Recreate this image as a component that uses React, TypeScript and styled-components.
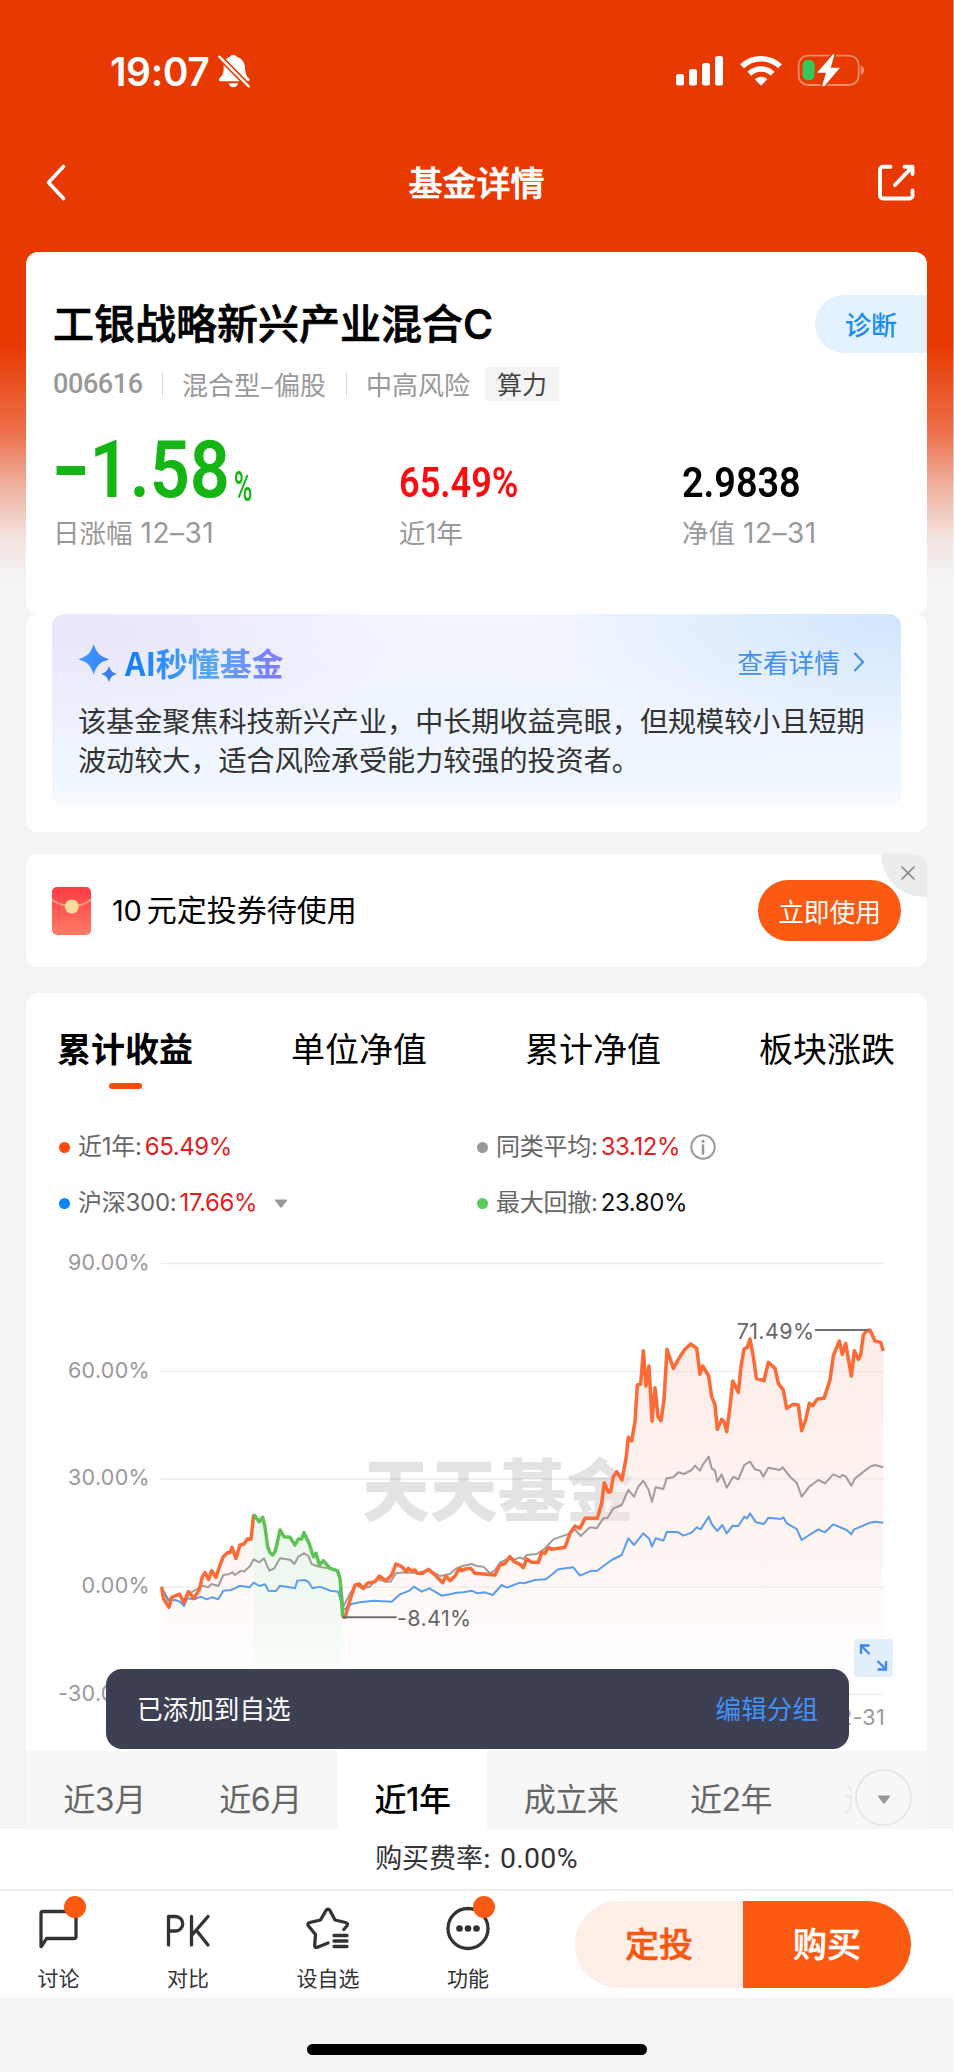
import React from "react";
import styled, { createGlobalStyle, css } from "styled-components";

const SANS = `Inter, "Noto Sans CJK SC", "Liberation Sans", sans-serif`;
const CJK = `"Noto Sans CJK SC", "Liberation Sans", sans-serif`;
const DIN = `Roboto, "Noto Sans CJK SC", sans-serif`;

const GlobalStyle = createGlobalStyle`
  *, *::before, *::after { box-sizing: border-box; }
  body { margin: 0; background: #f4f4f4; }
  button { border: 0; padding: 0; margin: 0; background: none; font: inherit; color: inherit; }
`;

const Page = styled.div`
  position: relative;
  width: 954px;
  height: 2072px;
  overflow: hidden;
  display: flex;
  flex-direction: column;
  font-family: ${SANS};
  color: #000;
  white-space: nowrap;
  border-right: 1px solid rgba(255, 255, 255, 0.55);
  background: linear-gradient(
    180deg,
    #e83901 0,
    #e83901 345px,
    #ec6f48 430px,
    #f0b5a4 490px,
    #f3e5e1 540px,
    #f4f4f4 580px
  );
`;

/* ---------- header ---------- */

const StatusBar = styled.header`
  height: 140px;
  padding: 0 88px 0 110px;
  display: flex;
  justify-content: space-between;
  color: #fff;
`;

const Clock = styled.div`
  display: flex;
  align-items: center;
  height: 142px;
  font-size: 39px;
  font-weight: 600;
  letter-spacing: -0.4px;
  svg { margin-left: 9px; }
`;

const StatusIcons = styled.div`
  display: flex;
  align-items: center;
  height: 140px;
`;

const NavBar = styled.nav`
  height: 112px;
  padding: 0 38px 0 46px;
  display: flex;
  justify-content: space-between;
  align-items: flex-start;
  color: #fff;
  svg { display: block; margin-top: 23px; }
`;

const NavTitle = styled.h1`
  margin: 0 0 0 9px;
  font: 500 34px/84px ${CJK};
  -webkit-text-stroke: 0.7px currentColor;
`;

/* ---------- cards ---------- */

const Card = styled.section<{ $h: number; $gap?: number; $r?: string }>`
  position: relative;
  flex: none;
  width: 901px;
  height: ${(p) => p.$h}px;
  margin: 0 0 ${(p) => p.$gap ?? 0}px 26px;
  border-radius: ${(p) => p.$r ?? "12px"};
  background: #fff;
`;

const FundHead = styled.div`
  display: flex;
  justify-content: space-between;
  align-items: center;
  padding: 43px 0 0 27px;
  height: 101px;
`;

const FundName = styled.h2`
  margin: 0;
  font: 500 41px/58px Inter, ${CJK};
  -webkit-text-stroke: 0.7px currentColor;
`;

const DiagnoseButton = styled.button`
  width: 112px;
  height: 58px;
  border-radius: 29px 0 0 29px;
  background: #e4f2ff;
  color: #1a8cf5;
  font: 500 26px/54px ${CJK};
`;

const MetaRow = styled.div`
  display: flex;
  align-items: center;
  height: 34px;
  margin: 14px 0 0 27px;
  font: 400 26px/32px ${CJK};
  color: #999;
`;

const FundCode = styled.span`
  width: 109px;
  font: 500 27px/34px ${DIN};
  letter-spacing: -0.4px;
`;

const MetaItem = styled.span<{ $w: number }>`
  display: flex;
  align-items: center;
  width: ${(p) => p.$w}px;
  &::before {
    content: "";
    width: 1px;
    height: 25px;
    margin-right: 19px;
    background: #ddd;
  }
`;

const Tag = styled.span`
  width: 74px;
  height: 34px;
  text-align: center;
  font-size: 25px;
  line-height: 32px;
  color: #444;
  background: #f4f4f4;
`;

const Stats = styled.div`
  display: grid;
  grid-template-columns: 346px 283px auto;
  grid-template-rows: 96px 36px;
  align-items: baseline;
  margin: 21px 0 0 27px;
`;

const StatValue = styled.div<{ $color: string; $size: number; $scale: number }>`
  font: 600 ${(p) => p.$size}px/96px ${DIN};
  color: ${(p) => p.$color};
  transform: scaleX(${(p) => p.$scale});
  transform-origin: left;
`;

const Minus = styled.i`
  display: inline-block;
  width: 32px;
  height: 9px;
  margin: 0 5px 22px 4px;
  vertical-align: baseline;
  background: currentColor;
`;

const Unit = styled.small`
  display: inline-block;
  font-size: 42px;
  font-weight: 500;
  transform: scaleX(0.68) translateY(4px);
  transform-origin: left;
  margin-left: 4px;
`;

const StatLabel = styled.div`
  margin-top: -3px;
  font: 400 26.5px/36px Inter, ${CJK};
  color: #999;
  span { margin-left: 8px; font-size: 28px; letter-spacing: 0.5px; }
`;

/* ---------- AI summary ---------- */

const AiBox = styled.div`
  position: relative;
  width: 849px;
  height: 192px;
  margin-left: 26px;
  padding: 26px 27px 0 26px;
  border-radius: 12px;
  background:
    linear-gradient(180deg, rgba(255, 255, 255, 0) 88%, rgba(255, 255, 255, 0.6) 100%),
    radial-gradient(340px 120px at 4% 10%, #e9e6fa, rgba(233, 230, 250, 0)),
    radial-gradient(380px 130px at 102% 0, #cfe5fd, rgba(207, 229, 253, 0)),
    linear-gradient(180deg, #f3f6fe, #eef5fe 55%, #f0f7ff);
`;

const AiHead = styled.div`
  display: flex;
  align-items: center;
  height: 44px;
`;

const AiTitle = styled.strong`
  margin-left: 7px;
  font: 700 32px/44px ${CJK};
  letter-spacing: -0.1px;
  background: linear-gradient(90deg, #0f7cff, #58a8f8 55%, #8078ff);
  -webkit-background-clip: text;
  background-clip: text;
  color: transparent;
`;

const MoreLink = styled.a`
  display: flex;
  align-items: center;
  gap: 13px;
  margin-left: auto;
  margin-right: 9px;
  font: 400 25.7px/44px ${CJK};
  color: #4390ee;
`;

const AiText = styled.p`
  margin: 16px 0 0;
  font: 400 28.1px/39px ${CJK};
  color: #333;
`;

/* ---------- coupon ---------- */

const CouponRow = styled.div`
  display: flex;
  align-items: center;
  height: 113px;
  padding: 0 26px 0 26px;
`;

const CouponText = styled.span`
  margin: -3px 0 0 21px;
  font: 400 30px/40px ${CJK};
  span { font-family: Inter; font-size: 29px; margin-right: 5px; letter-spacing: -0.2px; }
`;

const UseButton = styled.button`
  width: 143px;
  height: 61px;
  margin-left: auto;
  border-radius: 31px;
  background: #fc5a12;
  color: #fff;
  font: 400 25.7px/55px ${CJK};
  vertical-align: top;
`;

const CloseCorner = styled.button`
  position: absolute;
  top: 0;
  right: 0;
  width: 46px;
  height: 43px;
  padding-bottom: 6px;
  border-radius: 0 12px 0 44px;
  background: #ececec;
  svg { display: block; margin: 0 0 0 19px; }
`;

/* ---------- performance ---------- */

const SeriesTabs = styled.div`
  display: flex;
  justify-content: space-between;
  padding: 28px 32px 0 31px;
  height: 104px;
`;

const SeriesTab = styled.button<{ $on?: boolean }>`
  display: flex;
  flex-direction: column;
  align-items: center;
  height: 68px;
  font: ${(p) => (p.$on ? 700 : 400)} 34px/54px ${CJK};
  ${(p) =>
    p.$on &&
    css`
      &::after {
        content: "";
        width: 33px;
        height: 7px;
        margin-top: 8px;
        border-radius: 4px;
        background: #ff4a0a;
      }
    `}
`;

const Legend = styled.div`
  display: grid;
  grid-template-columns: 418px auto;
  grid-template-rows: 56px 56px;
  align-items: center;
  padding: 22px 0 0 33px;
  height: 143px;
`;

const LegendItem = styled.div<{ $dot: string }>`
  display: flex;
  align-items: center;
  font: 400 24px/34px Inter, ${CJK};
  letter-spacing: -0.25px;
  color: #666;
  &::before {
    content: "";
    width: 11px;
    height: 11px;
    margin-right: 8px;
    border-radius: 50%;
    background: ${(p) => p.$dot};
  }
  svg { margin-left: 10px; }
`;

const LegendValue = styled.span<{ $dark?: boolean }>`
  margin-left: 3px;
  letter-spacing: -0.4px;
  color: ${(p) => (p.$dark ? "#111" : "#e81c1c")};
`;

const CaretSlot = styled.span`
  display: flex;
  margin-left: 7px;
`;

const ChartSvg = styled.svg`
  display: block;
  margin-left: 1px;
  font-family: Inter, sans-serif;
`;

const ExpandButton = styled.button`
  position: absolute;
  left: 828px;
  top: 646px;
  width: 39px;
  height: 38px;
  border-radius: 3px;
  background: #e4effc;
  svg { display: block; }
`;

const RangeBar = styled.div`
  position: relative;
  display: flex;
  align-items: stretch;
  width: 901px;
  height: 78px;
  margin-left: 26px;
  background: #f7f7f7;
`;

const Range = styled.button<{ $w: number; $on?: boolean }>`
  width: ${(p) => p.$w}px;
  padding-top: 3px;
  font: ${(p) => (p.$on ? 500 : 400)} 32px/92px Inter, ${CJK};
  letter-spacing: -0.5px;
  color: ${(p) => (p.$on ? "#000" : "#666")};
  background: ${(p) => (p.$on ? "#fff" : "transparent")};
`;

const RangePeek = styled.span`
  width: 8px;
  margin-left: auto;
  margin-right: 3px;
  overflow: hidden;
  font: 400 32px/92px ${CJK};
  color: #ebebeb;
`;

const RangeMore = styled.button`
  flex: none;
  width: 57px;
  height: 57px;
  margin: 18px 15px 0 0;
  border: 2px solid #e6e6e6;
  border-radius: 50%;
  svg { display: block; margin: 3px auto 0; }
`;

/* ---------- toast & footer ---------- */

const Toast = styled.div`
  position: absolute;
  left: 106px;
  top: 1669px;
  width: 743px;
  height: 80px;
  padding: 0 31px;
  display: flex;
  justify-content: space-between;
  border-radius: 16px;
  background: rgba(57, 59, 80, 0.98);
  color: #fff;
  font: 400 25.6px/77px ${CJK};
  a { color: #4290f5; }
`;

const Footer = styled.footer`
  background: #fff;
`;

const Fee = styled.div`
  height: 62px;
  padding-top: 1px;
  border-bottom: 2px solid #f0f0f0;
  text-align: center;
  font: 400 27px/58px Inter, ${CJK};
  color: #333;
  span { margin-left: 9px; letter-spacing: 0.3px; font-family: Roboto; font-size: 28.5px; }
`;

const ActionBar = styled.div`
  display: flex;
  height: 107px;
`;

const Action = styled.button<{ $w: number }>`
  position: relative;
  display: flex;
  flex-direction: column;
  align-items: center;
  width: ${(p) => p.$w}px;
  padding-top: 15px;
  font: 400 21px/30px ${CJK};
  color: #333;
  svg { display: block; margin-bottom: 12px; overflow: visible; }
`;

const Badge = styled.i<{ $x: number }>`
  position: absolute;
  left: ${(p) => p.$x}px;
  top: 5px;
  width: 22px;
  height: 22px;
  border-radius: 50%;
  background: #fc5a12;
`;

const Trade = styled.div`
  display: flex;
  width: 336px;
  height: 87px;
  margin: 10px 0 0 auto;
  margin-right: 42px;
  overflow: hidden;
  border-radius: 44px;
`;

const TradeButton = styled.button<{ $solid?: boolean }>`
  flex: 1;
  padding-bottom: 3px;
  font: 500 34px/80px ${CJK};
  -webkit-text-stroke: 0.5px currentColor;
  color: ${(p) => (p.$solid ? "#fff" : "#f9560f")};
  background: ${(p) => (p.$solid ? "#fc5a12" : "#fdeee8")};
`;

const HomeArea = styled.div`
  flex: 1;
  padding: 46px 0 0 307px;
  background: #f4f4f4;
  &::after {
    content: "";
    display: block;
    width: 340px;
    height: 11px;
    border-radius: 6px;
    background: #000;
  }
`;

/* ---------- chart data (thirds of a pixel inside the plot group) ---------- */

type Pt = [number, number];
const pts = (s: string, dx = 0): Pt[] =>
  s.trim().split(/\s+/).map((p) => {
    const [x, y] = p.split(",").map(Number);
    return [x + dx, y] as Pt;
  });
const line = (p: Pt[]) => "M" + p.map((q) => q.join(",")).join("L");
const area = (p: Pt[], base: number) =>
  `${line(p)}L${p[p.length - 1][0]},${base}L${p[0][0]},${base}Z`;

const H2 = 1140;
const rise = pts(
  "65,1040 70,1075 87,1102 95,1072 118,1062 132,1088 145,1055 162,1075 178,1048 187,1010 195,998 206,1018 215,992 228,1012 240,975 250,950 262,938 270,938 276,922 288,955 300,915 312,912 322,897 333,898 341,823"
);
const drawdown = pts(
  "341,823 358,845 368,832 375,860 383,920 390,938 398,945 405,935 411,912 420,870 432,890 450,892 465,915 475,897 485,897 492,878 508,912 520,950 528,940 538,975 550,962 570,985 592,992 600,1015 608,1130"
);
const recovery = [
  ...pts(
    "608,1130 615,1132 630,1080 645,1035 658,1032 670,1045 682,1030 705,1025 718,1008 738,1022 755,1005 768,972 784,979 800,995 805,985 815,992 825,990 832,1000 848,1000 865,988 885,1005 908,1028 918,1008 930,1022 945,1008 958,985 965,992 975,987 992,985 1005,1000 1065,1005 1080,975 1095,970 1110,950 1122,965 1140,973"
  ),
  ...pts(
    "10,983 20,957 35,967 55,967 65,937 75,940 85,922 95,928 135,922 150,880 165,858 180,865 195,835 232,835 245,790 253,728 265,757 272,755 280,710 290,695 306,720 318,655 325,592 335,603 345,545 352,435 362,432 370,332 378,438 387,378 396,543 405,443 414,530 423,542 432,480 441,328 460,385 480,350 495,328 512,312 530,325 540,403 548,378 566,408 575,470 585,495 592,568 605,538 612,545 620,575 630,500 638,423 655,457 663,380 672,327 682,322 690,297 700,350 709,415 732,422 745,367 765,385 775,430 790,450 800,505 820,493 835,495 845,572 857,540 868,490 878,497 892,477 912,475 930,420 940,347 958,303 967,343 977,310 994,408 1003,332 1015,358 1022,345 1030,285 1040,272 1050,270 1065,303 1082,307 1090,333",
    H2
  ),
];
const peers = [
  ...pts(
    "65,1045 85,1078 118,1062 132,1085 148,1060 175,1045 187,1037 205,1042 215,1032 235,1038 250,1005 265,1003 277,997 285,1005 303,992 312,995 330,978 341,958 358,967 372,955 388,992 403,985 420,955 440,958 452,960 463,972 475,950 492,940 505,948 515,972 530,978 545,982 570,985 595,992 603,1030 610,1100 630,1060 648,1035 665,1045 690,1040 700,1028 715,1018 735,1025 752,1025 768,1000 795,997 832,1000 865,988 900,1008 930,1002 950,985 968,978 995,972 1010,978 1030,980 1050,1000 1065,990 1080,968 1105,955 1125,958"
  ),
  ...pts(
    "0,952 10,957 20,945 50,942 75,925 100,898 150,880 165,868 182,888 210,862 230,865 250,835 262,835 280,805 305,795 325,750 342,770 355,740 370,722 385,748 396,785 407,742 430,747 440,715 460,712 475,697 492,702 515,690 525,677 540,692 550,672 566,650 575,685 585,692 592,725 605,703 620,743 640,710 655,718 673,675 690,665 705,688 720,692 730,710 745,683 780,690 788,682 810,710 830,728 845,770 868,740 895,720 915,730 940,703 960,712 967,705 978,710 994,737 1005,715 1025,700 1050,680 1065,675 1090,682",
    H2
  ),
];
const csi300 = [
  ...pts(
    "65,1045 85,1082 105,1080 120,1085 132,1098 142,1075 162,1078 182,1070 200,1078 215,1072 235,1078 250,1052 272,1050 285,1045 300,1037 328,1042 341,1028 358,1038 375,1033 385,1052 408,1053 420,1037 440,1040 465,1045 472,1022 492,1020 505,1025 517,1045 540,1040 570,1052 595,1055 610,1110 635,1092 660,1087 700,1082 755,1085 780,1063 808,1052 822,1040 845,1055 868,1045 905,1067 930,1063 950,1058 970,1057 995,1052 1012,1060 1035,1057 1058,1065 1085,1035 1100,1043"
  ),
  ...pts(
    "0,1028 12,1030 45,1020 78,1018 115,988 160,982 180,1007 215,992 230,993 275,960 305,945 325,895 342,915 370,880 388,897 396,920 407,895 430,902 441,875 475,877 490,887 515,878 530,862 542,868 566,830 575,852 592,873 607,855 620,880 638,857 655,858 673,830 682,835 690,820 708,847 732,852 745,833 782,837 790,832 800,850 830,867 845,900 868,885 895,868 915,877 940,853 980,870 994,883 1003,868 1050,848 1065,845 1090,848",
    H2
  ),
];

const AXIS: [string, number][] = [
  ["90.00%", 23.5],
  ["60.00%", 131.5],
  ["30.00%", 239],
  ["0.00%", 347],
  ["-30.00%", 454.5],
];

const Chart = () => (
  <ChartSvg width="900" height="511" viewBox="0 0 900 511">
    <defs>
      <linearGradient id="warm" gradientUnits="userSpaceOnUse" x1="0" y1="270" x2="0" y2="1362">
        <stop offset="0" stopColor="#f9d9cf" stopOpacity="0.5" />
        <stop offset="0.65" stopColor="#fceae4" stopOpacity="0.42" />
        <stop offset="1" stopColor="#fff" stopOpacity="0.2" />
      </linearGradient>
      <linearGradient id="green" gradientUnits="userSpaceOnUse" x1="0" y1="820" x2="0" y2="1362">
        <stop offset="0" stopColor="#e8f6ea" />
        <stop offset="0.6" stopColor="#f4fbf5" />
        <stop offset="1" stopColor="#fbfefb" />
      </linearGradient>
    </defs>
    {AXIS.map(([label, y]) => (
      <line key={label} x1="134" x2="857" y1={y} y2={y} stroke="#ececec" strokeWidth="1.6" />
    ))}
    <text x="335" y="276" fontSize="68" fontWeight="900" fill="#000" fillOpacity="0.11" fontFamily="Noto Sans CJK SC">
      天天基金
    </text>
    <g fontSize="21.5" fill="#999" letterSpacing="0.3">
      {AXIS.map(([label, y]) => (
        <text key={label} x="123" y={y + 6} textAnchor="end">
          {label}
        </text>
      ))}
      <text x="134" y="485">2024-12-31</text>
      <text x="858" y="485" textAnchor="end">2025-12-31</text>
    </g>
    <g transform="translate(113 0) scale(0.33333)" fill="none" strokeLinejoin="round">
      <path d={area(rise, 1362)} fill="url(#warm)" />
      <path d={area(drawdown, 1362)} fill="url(#green)" />
      <path d={area(recovery, 1362)} fill="url(#warm)" />
      <path d={line(csi300)} stroke="#5a9df0" strokeWidth="6" />
      <path d={line(peers)} stroke="#8c8684" strokeOpacity="0.8" strokeWidth="6" />
      <path d={line(rise)} stroke="#fd6a35" strokeWidth="10.5" />
      <path d={line(recovery)} stroke="#fd6a35" strokeWidth="10.5" />
      <path d={line(drawdown)} stroke="#5dc357" strokeWidth="10.5" />
      <path d="M606,1132H770M2025,270H2186" stroke="#707070" strokeWidth="6" />
    </g>
    <g fontSize="21.500" fill="#666" letterSpacing="0.4">
      <text x="370" y="385.500">-8.41%</text>
      <text x="787.500" y="98.500" textAnchor="end">71.49%</text>
    </g>
  </ChartSvg>
);

/* ---------- icons ---------- */

const BellOff = () => (
  <svg width="32" height="34" viewBox="0 0 96 102">
    <path
      d="M46 2c6 0 9 3 10 6 16 4 24 17 25 33 1 18 4 24 12 32 3 3 2 9-3 9H8c-6 0-7-6-3-10 9-8 12-16 12-31C17 24 22 12 36 8c1-3 4-6 10-6zM32 88h28c-1 8-7 12-14 12s-13-4-14-12z"
      fill="#fff"
    />
    <path d="M3 7 92 97" stroke="#e83901" strokeWidth="17" />
    <path d="M4 8 92 97" stroke="#fff" strokeWidth="7" strokeLinecap="round" />
  </svg>
);

const Signal = () => (
  <svg width="48" height="31" viewBox="0 0 48 31" fill="#fff">
    <rect x="0" y="19" width="8" height="11.500" rx="2.500" />
    <rect x="13" y="14" width="8" height="16.500" rx="2.500" />
    <rect x="26" y="8" width="8" height="22.500" rx="2.500" />
    <rect x="39" y="1" width="8" height="29.500" rx="2.500" />
  </svg>
);

const WifiSvg = styled.svg`
  margin-left: 16px;
`;

const Wifi = () => (
  <WifiSvg width="42" height="31" viewBox="0 0 126 93">
    <g fill="none" stroke="#fff" strokeWidth="16.500">
      <path d="M6 34a82 82 0 0 1 114 0" />
      <path d="M28 56a50 50 0 0 1 70 0" />
    </g>
    <path d="M63 92 44 73a27 27 0 0 1 38 0z" fill="#fff" />
  </WifiSvg>
);

const BatterySvg = styled.svg`
  margin-left: 15px;
`;

const Battery = () => (
  <BatterySvg width="68" height="34" viewBox="0 0 204 102">
    <rect x="5" y="8" width="180" height="88" rx="28" fill="none" stroke="#fff" strokeOpacity="0.42" strokeWidth="5.500" />
    <path d="M191 38c14 2 14 26 0 28z" fill="#fff" fillOpacity="0.42" />
    <rect x="17" y="21" width="36" height="61" rx="15" fill="#34c759" />
    <path
      d="M107 5 60 59h27l-11 36c-1 5 4 6 7 3l46-54h-28l11-37c1-5-3-5-5-2z"
      fill="#fff"
      stroke="#e83901"
      strokeWidth="10"
      paintOrder="stroke"
    />
  </BatterySvg>
);

const Back = () => (
  <svg width="20" height="40" viewBox="0 0 20 40">
    <path d="M17.500 3.500 2.500 19.500l15 16" fill="none" stroke="#fff" strokeWidth="3.600" strokeLinecap="round" strokeLinejoin="round" />
  </svg>
);

const Share = () => (
  <svg width="37" height="40" viewBox="0 0 37 40" fill="none" stroke="#fff" strokeWidth="3.900" strokeLinecap="round" strokeLinejoin="round">
    <path d="M12.500 3.700H5a3 3 0 0 0-3 3V32.500a3 3 0 0 0 3 3H31.500a3 3 0 0 0 3-3V27.500" />
    <path d="M26.500 3.700H34.500V11M34 4.200 17 22" />
  </svg>
);

const Sparkles = () => (
  <svg width="40" height="40" viewBox="0 0 120 120">
    <defs>
      <linearGradient id="spark" x1="0" x2="1">
        <stop offset="0" stopColor="#3f9cff" />
        <stop offset="1" stopColor="#3a7ef5" />
      </linearGradient>
    </defs>
    <path d="M47 7c9 26 18 36 46 45-28 9-37 18-46 46C38 70 29 61 1 52 29 43 38 33 47 7z" fill="url(#spark)" />
    <path d="M93 72c5 14 9 19 23 24-14 5-18 10-23 24-5-14-9-19-23-24 14-5 18-10 23-24z" fill="#3a7ef5" />
  </svg>
);

const Envelope = () => (
  <svg width="39" height="48" viewBox="0 0 39 48">
    <defs>
      <linearGradient id="env" x1="0" x2="0" y1="0" y2="1">
        <stop offset="0" stopColor="#fc3b45" />
        <stop offset="1" stopColor="#ff7c62" />
      </linearGradient>
    </defs>
    <rect width="39" height="48" rx="5" fill="url(#env)" />
    <path d="M0 12.500C9 21 30 21 39 12.500" fill="none" stroke="#fd9a7c" strokeWidth="1.800" />
    <circle cx="19.800" cy="19.500" r="7" fill="#fddca0" />
  </svg>
);

const Caret = () => (
  <svg width="14" height="9" viewBox="0 0 14 9">
    <path d="M1.500.5h11q1.200.2.400 1.300L8 8q-1 1-2 0L1.100 1.800Q.300.700 1.500.5z" fill="#999" />
  </svg>
);

const Info = () => (
  <svg width="26" height="26" viewBox="0 0 26 26" fill="none" stroke="#999" strokeWidth="2">
    <circle cx="13" cy="13" r="11.700" />
    <path d="M13 11.500V19.500" strokeWidth="2.600" strokeLinecap="round" />
    <circle cx="13" cy="7.300" r="1.600" fill="#999" stroke="none" />
  </svg>
);

const icon = {
  width: 44,
  height: 44,
  viewBox: "0 0 44 44",
  fill: "none",
  stroke: "#333",
  strokeWidth: 3.3,
  strokeLinecap: "round",
  strokeLinejoin: "round",
} as const;

const Chat = () => (
  <svg {...icon}>
    <path d="M4 40.500V7.500Q4 5.500 6 5.500H37Q39 5.500 39 7.500V30.500Q39 32.500 37 32.500H9.500L4.500 40.500z" />
  </svg>
);

const Versus = () => (
  <svg {...icon}>
    <path d="M2.500 39V10.500H9.500a7.200 7.200 0 0 1 0 14.500H3M25.500 10.500V39M42 10.500 26 29M30.500 24.500 42 39" />
  </svg>
);

const StarList = () => (
  <svg {...icon}>
    <path d="M22 37 11.500 41.200Q8.500 42.200 8.700 39L9.500 28.500 2.500 20Q.800 17.500 3.800 16.500L14.500 14 20 4.500Q22 1.700 24 4.500L29 14 39.500 16.500Q42.800 17.500 40.800 20L37.800 23.500" />
    <path d="M28 29.500H41M28 35H41M28 40.500H41" />
  </svg>
);

const Dots = () => (
  <svg {...icon}>
    <circle cx="22" cy="22.500" r="20" />
    <g fill="#333" stroke="none">
      <circle cx="13.500" cy="22.500" r="3.300" />
      <circle cx="22" cy="22.500" r="3.300" />
      <circle cx="30.500" cy="22.500" r="3.300" />
    </g>
  </svg>
);

export default function App() {
  return (
    <Page>
      <GlobalStyle />
      <StatusBar>
        <Clock>
          19:07
          <BellOff />
        </Clock>
        <StatusIcons>
          <Signal />
          <Wifi />
          <Battery />
        </StatusIcons>
      </StatusBar>
      <NavBar>
        <Back />
        <NavTitle>基金详情</NavTitle>
        <Share />
      </NavBar>

      <Card $h={362}>
        <FundHead>
          <FundName>工银战略新兴产业混合C</FundName>
          <DiagnoseButton>诊断</DiagnoseButton>
        </FundHead>
        <MetaRow>
          <FundCode>006616</FundCode>
          <MetaItem $w={184}>混合型–偏股</MetaItem>
          <MetaItem $w={139}>中高风险</MetaItem>
          <Tag>算力</Tag>
        </MetaRow>
        <Stats>
          <StatValue $color="#16b516" $size={79} $scale={0.89}>
            <Minus />1.58<Unit>%</Unit>
          </StatValue>
          <StatValue $color="#fe0b12" $size={42} $scale={0.86}>65.49%</StatValue>
          <StatValue $color="#000" $size={42} $scale={0.9}>2.9838</StatValue>
          <StatLabel>日涨幅<span>12–31</span></StatLabel>
          <StatLabel>近1年</StatLabel>
          <StatLabel>净值<span>12–31</span></StatLabel>
        </Stats>
      </Card>

      <Card $h={218} $gap={22}>
        <AiBox>
          <AiHead>
            <Sparkles />
            <AiTitle>AI秒懂基金</AiTitle>
            <MoreLink>
              查看详情
              <svg width="12" height="20" viewBox="0 0 12 20">
                <path d="M1.500 1 10 10 1.500 19" fill="none" stroke="#4390ee" strokeWidth="2.200" />
              </svg>
            </MoreLink>
          </AiHead>
          <AiText>
            该基金聚焦科技新兴产业，中长期收益亮眼，但规模较小且短期
            <br />
            波动较大，适合风险承受能力较强的投资者。
          </AiText>
        </AiBox>
      </Card>

      <Card $h={113} $gap={26}>
        <CouponRow>
          <Envelope />
          <CouponText>
            <span>10</span>元定投券待使用
          </CouponText>
          <UseButton>立即使用</UseButton>
        </CouponRow>
        <CloseCorner>
          <svg width="16" height="16" viewBox="0 0 16 16">
            <path d="M1.500 1.500 14.500 14.500M14.500 1.500 1.500 14.500" stroke="#888" strokeWidth="1.700" />
          </svg>
        </CloseCorner>
      </Card>

      <Card $h={758} $r="14px 14px 0 0">
        <SeriesTabs>
          <SeriesTab $on>累计收益</SeriesTab>
          <SeriesTab>单位净值</SeriesTab>
          <SeriesTab>累计净值</SeriesTab>
          <SeriesTab>板块涨跌</SeriesTab>
        </SeriesTabs>
        <Legend>
          <LegendItem $dot="#ff4a0a">
            近1年:<LegendValue>65.49%</LegendValue>
          </LegendItem>
          <LegendItem $dot="#999">
            同类平均:<LegendValue>33.12%</LegendValue>
            <Info />
          </LegendItem>
          <LegendItem $dot="#0a84ff">
            沪深300:<LegendValue>17.66%</LegendValue>
            <CaretSlot>
              <Caret />
            </CaretSlot>
          </LegendItem>
          <LegendItem $dot="#5ccb5f">
            最大回撤:<LegendValue $dark>23.80%</LegendValue>
          </LegendItem>
        </Legend>
        <Chart />
        <ExpandButton>
          <svg width="39" height="38" viewBox="0 0 39 38" fill="none" stroke="#3f86ee" strokeWidth="2.300">
            <path d="M15.500 6.500H7V15M7 6.500 15.500 15M23.500 30.500H32V22M32 30.500 23.500 22" />
          </svg>
        </ExpandButton>
      </Card>
      <RangeBar>
        <Range $w={157}>近3月</Range>
        <Range $w={155}>近6月</Range>
        <Range $w={149} $on>近1年</Range>
        <Range $w={168}>成立来</Range>
        <Range $w={152}>近2年</Range>
        <RangePeek>近</RangePeek>
        <RangeMore>
          <Caret />
        </RangeMore>
      </RangeBar>

      <Footer>
        <Fee>
          购买费率:<span>0.00%</span>
        </Fee>
        <ActionBar>
          <Action $w={117}>
            <Chat />
            讨论
            <Badge $x={64} />
          </Action>
          <Action $w={142}>
            <Versus />
            对比
          </Action>
          <Action $w={138}>
            <StarList />
            设自选
          </Action>
          <Action $w={142}>
            <Dots />
            功能
            <Badge $x={76} />
          </Action>
          <Trade>
            <TradeButton>定投</TradeButton>
            <TradeButton $solid>购买</TradeButton>
          </Trade>
        </ActionBar>
      </Footer>
      <HomeArea />

      <Toast>
        已添加到自选
        <a>编辑分组</a>
      </Toast>
    </Page>
  );
}
